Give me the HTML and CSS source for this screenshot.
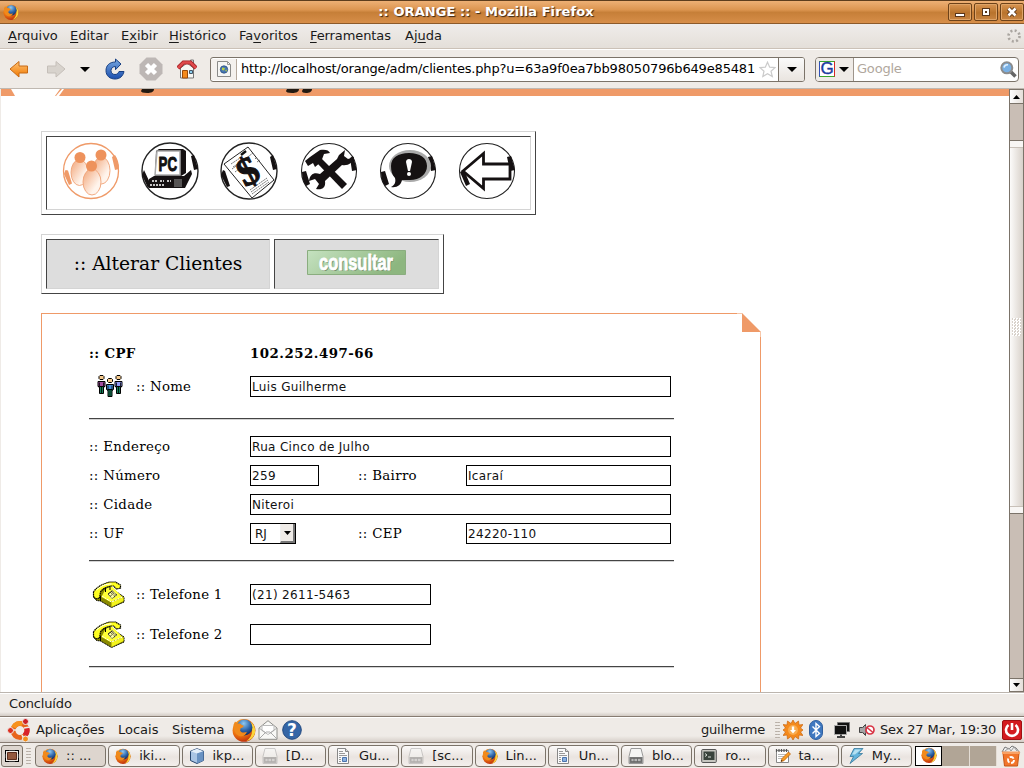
FILE: index.html
```html
<!DOCTYPE html>
<html lang="pt-BR">
<head>
<meta charset="utf-8">
<title>:: ORANGE ::</title>
<link rel="stylesheet" href="styles.css">
</head>
<body>
<svg class="defs" width="0" height="0">
  <defs>
    <radialGradient id="fox" cx="35%" cy="30%" r="75%"><stop offset="0" stop-color="#f8b02c"/><stop offset=".55" stop-color="#ee7510"/><stop offset="1" stop-color="#b8280c"/></radialGradient>
    <radialGradient id="globe" cx="45%" cy="25%" r="75%"><stop offset="0" stop-color="#8fc8f0"/><stop offset=".6" stop-color="#2c63a8"/><stop offset="1" stop-color="#122c60"/></radialGradient>
    <linearGradient id="orange" x2="0" y2="1"><stop offset="0" stop-color="#ffc477"/><stop offset="1" stop-color="#f07800"/></linearGradient>
    <linearGradient id="blue" x2="0" y2="1"><stop offset="0" stop-color="#78a8e0"/><stop offset="1" stop-color="#1c4fae"/></linearGradient>
    <linearGradient id="body" x2="1" y2="1"><stop offset="0" stop-color="#f1a376"/><stop offset=".7" stop-color="#fff4ec"/></linearGradient>
    <linearGradient id="green" x2="1" y2=".3"><stop offset="0" stop-color="#c5e2c0"/><stop offset="1" stop-color="#8db67f"/></linearGradient>
    <symbol id="i-fox" viewBox="0 0 16 16">
      <circle cx="8" cy="8.3" r="7.6" fill="url(#fox)"/>
      <path d="M12.5 2.5C15.6 5 16.3 9 14.4 12.2c-1.2 1.9-3 3-4.800 3.200 2.400-1.500 3.800-4 3.800-7 0-2.500-.4-4.200-.9-5.900z" fill="#fbd43a"/>
      <circle cx="8.300" cy="6.300" r="5.300" fill="url(#globe)"/>
      <path d="M1 4.500 2 2.300l1.800 1.500c1-.4 2 0 2.600.8l1.500.5c-.3 1-1.400 1.300-2.200 1.800l-.3 1.600c1 1.500 3 1.500 4.500.7-.4 2-2.300 3.300-4.400 3C2.700 11.500.8 8.400 1 4.500z" fill="#f08a1c"/>
    </symbol>
    <symbol id="i-doc" viewBox="0 0 16 16"><path d="M2.500.5h8l3 3v12h-11z" fill="#fafafa" stroke="#888"/><path d="M10.500.5v3h3" fill="#ddd" stroke="#888"/><path d="M4 3.500h4M4 5.500h6M4 7.500h8M4 9.500h2M4 11.500h2M4 13.500h2" stroke="#999"/><path d="M7.500 9.500h4v4h-4z" fill="#8ab0de" stroke="#4a74ae"/></symbol>
    <symbol id="i-calc" viewBox="0 0 16 16"><path d="M3 .5h10l2 8v7H1v-7z" fill="#f5f5f4" stroke="#999"/><path d="M1.500 9h13v6h-13z" fill="#777"/><path d="M3 10.500h10v3H3zM6 10v4M9.500 10v4M3 12h10" fill="#eee" stroke="#666" stroke-width=".8"/></symbol>
    <symbol id="i-cube" viewBox="0 0 16 16"><path d="m8 .7 6.500 2.500v9.200L8 15.500l-6.500-3V3.200z" fill="#a9c4e4" stroke="#26456f"/><path d="M1.500 3.200 8 5.500l6.500-2.300L8 .7z" fill="#e3eefa"/><path d="M8 5.500v10l6.500-3V3.200z" fill="#6a92c2"/></symbol>
    <symbol id="i-term" viewBox="0 0 16 16"><rect x=".7" y="1.500" width="14.600" height="13" rx="1" fill="#c6c6c0" stroke="#555"/><rect x="2.500" y="3.500" width="11" height="8.500" fill="#39433c"/><path d="m4 5.500 2 1.500-2 1.500M7 9h3" fill="none" stroke="#d8e0d8"/></symbol>
    <symbol id="i-note" viewBox="0 0 16 16"><path d="M1.500 2.500h12v12h-12z" fill="#fff" stroke="#888"/><path d="M1.500 1v3M4 1v3M6.500 1v3M9 1v3M11.500 1v3" stroke="#555" stroke-width="1.200"/><path d="M3 6.500h8M3 8.500h6M3 10.500h5" stroke="#bbb"/><path d="m6 13.500 1-3L13.500 4l2 2-6.500 6.700z" fill="#f79b25" stroke="#b95b06" stroke-width=".7"/><path d="m6 13.500.5-1.500 1 .9z"/></symbol>
    <symbol id="i-bolt" viewBox="0 0 16 16"><path d="M6 .5h9l-4.500 5h4L2 15.500l3.500-7H2z" fill="#64b4dc" stroke="#387a9c" stroke-width=".8"/><path d="M7 1.500h6L7 6.500H4z" fill="#b5e1f2"/></symbol>
    <symbol id="i-phone" viewBox="0 0 32 27">
      <path d="M1.500 12 1 16l3 3.500 4 .5 11 6.500 12.500-5.500v-5L20 8l-4-2z" fill="#8a8a00" stroke="#000" stroke-dasharray="1.500 .5"/>
      <path d="m9 16 4-8 6-3 2 2 9 9-12 5z" fill="#ff3"/><path d="m19 21 12-5v4l-12 6z" fill="#f3f31c"/>
      <path d="m9.500 15 9.500 6 11-5" fill="none" stroke="#fff" stroke-dasharray="2 1"/>
      <path d="m15 13 5-4 5 5-6 4z" fill="#ffffa8"/><path d="m15.500 13 4-3.500 5 4.500-5 3.500zm2-2 5 4.500m-4-5.500 5 4.500m-6 1 4-3.500m-6 1.500 4-3.500" fill="none" stroke="#000" stroke-width=".9" stroke-dasharray="1 .8"/>
      <path d="M1 11C4 6 10 3 17 1h6l5 3v3l-4 1-3-3h-2C13 6 10 8 8 11l-1 6-4 1-2-3z" fill="#ffff21" stroke="#000" stroke-width="1.200" stroke-dasharray="1.500 .5"/>
      <path d="M4 9c4-4 9-6 15-6" fill="none" stroke="#fff"/><path d="M17.500 5v4M13 7v4M8 15v5" fill="none" stroke="#000"/>
    </symbol>
    <symbol id="i-man" viewBox="0 0 9 19" preserveAspectRatio="none"><path d="M1 6.500h7v5H7v1H2v-1H1z" fill="currentColor" stroke="#000"/><path d="M2.500 11.500h4v7h-4z" fill="#16805a" stroke="#000"/><path d="M4.500 12v6M2.500 7.500v4M6.500 7.500v4" stroke="#000" stroke-width=".8"/><path d="M3 .5h3l1 1v2l-1 1H3l-1-1v-2z" fill="#f5c98c" stroke="#000"/></symbol>
  </defs>
</svg>

<div class="screen">
  <header class="titlebar">
    <svg class="ic16 title-icon"><use href="#i-fox"/></svg>
    <h1>:: ORANGE :: - Mozilla Firefox</h1>
    <div class="winbtns">
      <span><svg viewBox="0 0 22 16"><path d="M6 9h10v4H6z" fill="#59361a"/><path d="M7 10h8v2H7z" fill="#fff"/></svg></span>
      <span><svg viewBox="0 0 22 16"><path d="M7 4h8v8H7z" fill="#59361a"/><path d="M8 5h6v6H8z" fill="#fff"/><path d="M10 7h2v2h-2z" fill="#59361a"/></svg></span>
      <span><svg viewBox="0 0 22 16"><path d="m7.500 4.500 7 7m0-7-7 7" stroke="#59361a" stroke-width="4.500"/><path d="m7.500 4.500 7 7m0-7-7 7" stroke="#fff" stroke-width="2.600"/></svg></span>
    </div>
  </header>

  <nav class="menubar">
    <span class="m1"><u>A</u>rquivo</span><span class="m2"><u>E</u>ditar</span><span class="m3">E<u>x</u>ibir</span><span class="m4"><u>H</u>istórico</span><span class="m5">Fa<u>v</u>oritos</span><span class="m6"><u>F</u>erramentas</span><span class="m7">Aj<u>u</u>da</span>
    <svg class="throbber" viewBox="0 0 14 14"><circle cx="7" cy="7" r="5.500" fill="none" stroke="#aaa5a0" stroke-width="2.600" stroke-dasharray="2 2.320"/></svg>
  </nav>

  <div class="toolbar">
    <div class="tools">
      <svg class="t-back" viewBox="0 0 20 18"><path d="M1 9 10 1.500V6h8.500v7H10v4z" fill="url(#orange)" stroke="#c76a16"/></svg>
      <svg class="t-fwd" viewBox="0 0 20 18"><path d="M19 9 10 1.500V6H1.500v7H10v4z" fill="#d8d3cd" stroke="#c5bfb9"/></svg>
      <svg class="t-drop" viewBox="0 0 10 5"><path d="M0 0h10L5 5z"/></svg>
      <svg class="t-reload" viewBox="0 0 20 22"><path d="M10.500 1v3C4 4 1 8 1 12.500 1 18 5 21 10 21c5 0 8-3 9-7.500h-5c-1 2-2 3-4 3-2.500 0-4-1.500-4-4 0-2.300 2-4 4.500-4v3.200L16 6z" fill="url(#blue)" stroke="#173f82"/></svg>
      <svg class="t-stop" viewBox="0 0 24 24"><path d="M7.500.5h9l7 7v9l-7 7h-9l-7-7v-9z" fill="#bdb7b5"/><path d="m7.500 7.500 9 9m0-9-9 9" stroke="#fff" stroke-width="4.500"/></svg>
      <svg class="t-home" viewBox="0 0 20 20"><path d="M13.500 1h3v6h-3z" fill="#eee" stroke="#777"/><path d="M3.500 9 10 4l6.500 5v10h-13z" fill="#f7f7f4" stroke="#777"/><path d="M5.500 11.500h5v7.500h-5z" fill="#f58a1c" stroke="#9b4a08"/><path d="M12.500 11.500h3v3h-3z" fill="#8cd0f0" stroke="#456"/><path d="M1 9 6.500 3.500h7L19 9" fill="none" stroke="#9f1c20" stroke-width="4.200"/><path d="M1 9 6.500 3.500h7L19 9" fill="none" stroke="#df4a4c" stroke-width="2.600"/></svg>
    </div>
    <div class="urlbar">
      <span class="favicon"><svg viewBox="0 0 14 16"><path d="M.5.500h10l3 3v12H.5z" fill="#f6f6f4" stroke="#8a8a88"/><path d="M10.500.5v3h3" fill="none" stroke="#999"/><circle cx="7" cy="8.500" r="3.700" fill="#4677b4" stroke="#2a4e80" stroke-width=".8"/><path d="M5 6.500 8 7 7 9.500 5 9zM8 9.500l2-1-.5 2.200z" fill="#b9d040"/></svg></span>
      <span class="url">http://localhost/orange/adm/clientes.php?u=63a9f0ea7bb98050796b649e85481</span>
      <svg class="star" viewBox="0 0 17 17"><path d="m8.500 1.200 2.200 5 5.300.4-4 3.600 1.300 5.300-4.800-2.800-4.700 2.800L5 10.200 1 6.600l5.300-.4z" fill="#fff" stroke="#cbcbcb" stroke-width="1.200"/></svg>
      <span class="drop"><svg class="tri" viewBox="0 0 10 5"><path d="M0 0h10L5 5z"/></svg></span>
    </div>
    <div class="search">
      <span class="engine"><span class="glogo">G</span><svg class="tri" viewBox="0 0 10 5"><path d="M0 0h10L5 5z"/></svg></span>
      <span class="hint">Google</span>
      <svg class="lens" viewBox="0 0 17 17"><path d="m10.500 10.500 5 5" stroke="#666" stroke-width="3.500"/><circle cx="6.800" cy="6.800" r="5.500" fill="#79b0e4" stroke="#8c8c8c" stroke-width="2"/><path d="M4 6.500C4.500 4.500 6 3.600 8 3.800" stroke="#dff0ff" fill="none" stroke-width="1.700"/></svg>
    </div>
  </div>

  <div class="viewport">
    <main class="page">
      <svg class="banner" viewBox="0 0 1008 7" preserveAspectRatio="none">
        <path d="M0 0h1008v7H0z" fill="#ef9a68"/>
        <path d="M10 0h49l-5 7H14z" fill="#fff"/><path d="M63 0h-2l-6 7h3z" fill="#fff"/>
        <path d="M141 0h12c0 3-3 4-7 4-4 0-6-1-6-2zM286 0h12c0 3-3 4-7 4-4 0-6-1-6-2zM302 0h9c0 3-3 4-6 4-3 0-4-1-4-2z" fill="#231a12"/>
        <path d="M342 2h20M366 3h30M403 2h12" stroke="#e4a069" stroke-dasharray="5 3"/>
      </svg>
      <div class="bevel iconbar"><div class="cell icons">
        <svg viewBox="0 0 60 60"><circle cx="30" cy="30" r="27.500" fill="none" stroke="#ef9a68" stroke-width="1.300"/><path d="m4.500 29-1.500 4 5 11 3-1.500-4-13zM51 16l3-2c3 4 4 9 4 14l-4 1z" fill="#ef9a68"/><g fill="url(#body)" stroke="#efa176" stroke-width=".9"><ellipse cx="18.500" cy="31.500" rx="8.500" ry="13"/><ellipse cx="40.500" cy="29.500" rx="8.500" ry="13.500"/><ellipse cx="31" cy="41" rx="9" ry="13"/></g><g fill="#ee925c"><circle cx="19" cy="16.500" r="5.500"/><circle cx="40" cy="14" r="5.500"/><circle cx="30.500" cy="25" r="5.500"/></g></svg>
        <svg viewBox="0 0 60 60"><circle cx="30" cy="30" r="28" fill="#fff" stroke="#222" stroke-width="1.400"/><path d="M4 29 2 34l6 13 3-3zM51 15l3-1 4 14-4 1z" fill="#151112"/><path d="M14 35h30l7-6 1 4-7 14H9V38z" fill="#151112"/><path d="m16 10 3-2h24l3 2v22l-5 3H15z" fill="#151112"/><path d="M17 10h23v24H15z" fill="#fff" stroke="#aaa" stroke-width="1.500"/><text x="18.500" y="30" class="pc" textLength="18.500" lengthAdjust="spacingAndGlyphs">PC</text><path d="M12 40h5m3 0h4m3 0h4M10 44h15" stroke="#fff" stroke-width="1.600" stroke-dasharray="2 1"/><path d="M35 38v8m2-8v8m2-8v8m2-8v8" stroke="#bbb" stroke-width=".8"/></svg>
        <svg viewBox="0 0 60 60"><circle cx="30" cy="30" r="28" fill="none" stroke="#222" stroke-width="1.400"/><path d="m4 29-2 5 6 12 3-1-5-15zM51 16l3-2 4 14-4 1z" fill="#151112"/><path d="m5 23 24-17 26 33-22 18z" fill="#fff" stroke="#222"/><path d="m22 14 5-4" stroke="#111" stroke-width="2.500"/><path d="m12 23 9-6m-7 9 6-4m6-4 8-6M13 28l7-5m-4 8 4-3m16-10 2-2m0 5 3-2M31 49l17-12m-16 14 17-12m-16 14 17-12" stroke="#555" stroke-width=".8" stroke-dasharray="2 .7"/><text x="19" y="43" class="dollar" transform="rotate(-27 30 30)">$</text></svg>
        <svg viewBox="0 0 60 60"><circle cx="30" cy="30" r="27.500" fill="none" stroke="#222" stroke-width="1.100"/><path d="m3 31 4-1 4 13-4 2c-3-4-4-9-4-14zM51 17l3-2 4 14-5 1z" fill="#151112"/><path d="m22 17 26 26-5 5-25-26z" fill="#151112"/><path d="M11 16 21 9c5-1 9 0 10 3l-6 1-3 8-6 5-2-4-5 3-3-5z" fill="#151112"/><path d="m40 14 6-5-1 6 4 3 6-2c-1 6-6 9-12 8L26 40c1 7-3 9-9 8l3-5-4-5-6 2c1-7 5-9 11-7l17-15z" fill="#151112"/></svg>
        <svg viewBox="0 0 60 60"><circle cx="30" cy="30" r="27.500" fill="none" stroke="#222" stroke-width="1.100"/><path d="m3 31 4-1 4 13-4 2c-3-4-4-9-4-14zM50 16l4-1 4 14-5 1z" fill="#151112"/><ellipse cx="32" cy="25" rx="21" ry="16" fill="#aaa"/><path d="M31 12c11 0 18 5 18 13s-7 14-17 14h-8c-1 5-5 8-11 7 4-2 5-5 4-9-3-3-4-7-4-12 0-8 7-13 18-13z" fill="#151112"/><path d="M28 21c0-4 6-4 6 0l-2 9h-2z" fill="#fff"/><circle cx="31" cy="33" r="2" fill="#fff"/></svg>
        <svg viewBox="0 0 60 60"><circle cx="30" cy="30" r="27.500" fill="none" stroke="#222" stroke-width="1.100"/><path d="m3 31 4-2 6 14-4 2zM50 16l4-1 4 14-5 1z" fill="#151112"/><path d="M6 30 26.500 12.500V23H53v15H26.500v9.500z" fill="#fff" stroke="#151112" stroke-width="2.800"/></svg>
      </div></div>

      <div class="bevel headbar">
        <h2 class="cell">:: Alterar Clientes</h2>
        <div class="cell act"><svg class="consultar" viewBox="0 0 99 25"><path d="M.5.500h98v24H.5z" fill="url(#green)" stroke="#8aad7f"/><text x="13" y="21" class="shadow" textLength="74" lengthAdjust="spacingAndGlyphs">consultar</text><text x="12" y="20" class="face" textLength="74" lengthAdjust="spacingAndGlyphs">consultar</text></svg></div>
      </div>

      <form class="card">
        <svg class="fold" viewBox="0 0 24 24"><path d="M0 0h24v24H0z" fill="#fff"/><path d="M5 0v19h19z" fill="#ef9a68"/><path d="M0 .5h6M23.500 18v6" stroke="#f7c8aa"/></svg>
        <div class="row cpf"><b class="lbl">:: CPF</b><b class="big">102.252.497-66</b></div>
        <div class="row nome"><label class="lbl pic"><svg class="people" viewBox="0 0 26 22"><use href="#i-man" x="0" y="0" width="9" height="19" color="#a34da0"/><use href="#i-man" x="17" y="0" width="9" height="19" color="#949cf8"/><use href="#i-man" x="8.500" y="3" width="9" height="19" color="#4990dc"/></svg><span>:: Nome</span></label><span class="inp full">Luis Guilherme</span></div>
        <hr>
        <div class="row"><label class="lbl">:: Endereço</label><span class="inp full">Rua Cinco de Julho</span></div>
        <div class="row"><label class="lbl">:: Número</label><span class="first"><span class="inp num">259</span></span><label class="lbl2">:: Bairro</label><span class="inp half">Icaraí</span></div>
        <div class="row"><label class="lbl">:: Cidade</label><span class="inp full">Niteroi</span></div>
        <div class="row"><label class="lbl">:: UF</label><span class="first"><span class="inp sel"><span>RJ</span><i><svg viewBox="0 0 7 4"><path d="M0 0h7L3.500 4z"/></svg></i></span></span><label class="lbl2">:: CEP</label><span class="inp half">24220-110</span></div>
        <hr>
        <div class="row tel1"><label class="lbl pic"><svg class="phone"><use href="#i-phone"/></svg><span>:: Telefone 1</span></label><span class="inp tel">(21) 2611-5463</span></div>
        <div class="row tel2"><label class="lbl pic"><svg class="phone"><use href="#i-phone"/></svg><span>:: Telefone 2</span></label><span class="inp tel"></span></div>
        <hr>
      </form>
    </main>
    <div class="scroll">
      <span class="sbtn"><svg viewBox="0 0 7 4"><path d="M0 4h7L3.500 0z"/></svg></span>
      <span class="thumb"><span class="grip"></span></span>
      <span class="sbtn"><svg viewBox="0 0 7 4"><path d="M0 0h7L3.500 4z"/></svg></span>
    </div>
  </div>

  <div class="status">Concluído</div>

  <div class="panel">
    <svg class="ubuntu" viewBox="0 0 24 24"><circle cx="13" cy="12.500" r="7" fill="none" stroke="#e8641c" stroke-width="5"/><path d="M6.500 9.500a7 7 0 0 1 9-3.500" fill="none" stroke="#f7921e" stroke-width="5"/><path d="M19.500 9.500a7 7 0 0 1-2 8" fill="none" stroke="#d8232a" stroke-width="5"/><path d="m17 10 6-1M15 17l3 6M3 12h6" stroke="#efebe7" stroke-width="1.600"/><g stroke="#efebe7"><circle cx="3.500" cy="12.500" r="3" fill="#dc2f20"/><circle cx="18.500" cy="3.500" r="3" fill="#cc2027"/><circle cx="18.500" cy="21" r="3" fill="#f38e1b"/></g></svg>
    <span class="p1">Aplicações</span><span class="p2">Locais</span><span class="p3">Sistema</span>
    <svg class="pfox"><use href="#i-fox"/></svg>
    <svg class="mail" viewBox="0 0 20 20"><path d="M1 8 10 .7 19 8v11.300H1z" fill="#f8f8f6" stroke="#8e8e8a"/><path d="M4 5.500h12v5l-6 4-6-4z" fill="#fff" stroke="#bbb"/><path d="m1 19 7-7h4l7 7M1 8l7 5m11-5-7 5" fill="none" stroke="#aaa"/></svg>
    <svg class="help" viewBox="0 0 20 20"><circle cx="10" cy="10" r="9.300" fill="#3566a6" stroke="#234a80"/><text x="10" y="16" text-anchor="middle">?</text></svg>
    <span class="user">guilherme</span><i class="dots"></i>
    <svg class="sun" viewBox="0 0 20 20"><path d="m10 0 2 3.500L15.500 1l.5 4 4-.5L17.500 8l2.500 2-2.500 2 2.500 3.500-4-.5-.5 4-3.500-2.500L10 20l-2-3.500L4.500 19 4 15l-4 .5L2.500 12 0 10l2.500-2L0 4.500 4 5l.5-4L8 3.500z" fill="#f58a1c" stroke="#ca6610" stroke-width=".7"/><circle cx="10" cy="10" r="5" fill="#f9ac50"/><path d="M8.800 6.500h2.400V10H13l-3 3.500L7 10h1.800z" fill="#fff"/></svg>
    <svg class="bt" viewBox="0 0 14 20"><rect x=".5" y=".5" width="13" height="19" rx="6.500" fill="#3f78c0" stroke="#2f5f9f"/><path d="m3.500 6.500 7 7L7 16.500v-13l3.500 3-7 7" fill="none" stroke="#fff" stroke-width="1.400"/></svg>
    <svg class="net" viewBox="0 0 16 17"><path d="M3.500 1.500h12v9h-12z" fill="#111" stroke="#777"/><path d="M.5 4.500h12v9H.5z" fill="#111" stroke="#aaa"/><path d="M3 16h8M7 13.500V16" stroke="#444" stroke-width="2"/></svg>
    <svg class="vol" viewBox="0 0 16 14"><path d="M.5 4.500h3l3-3v11l-3-3h-3z" fill="#888" stroke="#444"/><path d="M2 5v4M4 5v4M6 3v7" stroke="#ddd" stroke-width=".7"/><circle cx="11" cy="7" r="4" fill="#fff" stroke="#d93646" stroke-width="1.700"/><path d="m8 4.500 6 5" stroke="#d93646" stroke-width="1.600"/></svg>
    <span class="clock">Sex 27 Mar, 19:30</span>
    <svg class="power" viewBox="0 0 20 20"><rect x=".5" y=".5" width="19" height="19" rx="1.500" fill="#d31b1f" stroke="#9f1013"/><path d="M6.500 5a6 6 0 1 0 7 0" fill="none" stroke="#fff" stroke-width="2.600"/><path d="M10 3v7" stroke="#fff" stroke-width="2.600"/></svg>
  </div>

  <div class="taskbar">
    <span class="desk"><svg viewBox="0 0 14 12"><path d="M.5.500h13v11H.5z" fill="#efe9e2" stroke="#333"/><path d="M2.500 2.500h9v7h-9z" fill="#94583c" stroke="#5a2c1b"/><path d="M0 4V0h4M10 0h4v4M14 8v4h-4M4 12H0V8" fill="none" stroke="#000" stroke-width="2"/></svg></span>
    <i class="dots"></i>
    <div class="tasks">
      <span class="task on"><svg><use href="#i-fox"/></svg>:: ...</span>
      <span class="task"><svg><use href="#i-fox"/></svg>iki...</span>
      <span class="task"><svg><use href="#i-cube"/></svg>ikp...</span>
      <span class="task dim"><svg><use href="#i-calc"/></svg>[D...</span>
      <span class="task"><svg><use href="#i-doc"/></svg>Gu...</span>
      <span class="task dim"><svg><use href="#i-calc"/></svg>[sc...</span>
      <span class="task"><svg><use href="#i-fox"/></svg>Lin...</span>
      <span class="task"><svg><use href="#i-doc"/></svg>Un...</span>
      <span class="task"><svg><use href="#i-calc"/></svg>blo...</span>
      <span class="task"><svg><use href="#i-term"/></svg>ro...</span>
      <span class="task"><svg><use href="#i-note"/></svg>ta...</span>
      <span class="task"><svg><use href="#i-bolt"/></svg>My...</span>
    </div>
    <div class="pager"><span class="cur"><svg class="ic16"><use href="#i-fox"/></svg></span><span></span><span></span></div>
    <svg class="trash" viewBox="0 0 20 22"><path d="m1 7 3-5 4 2 3-3 4 2 4 5z" fill="#eee" stroke="#777"/><path d="m4 6 4-3 2 3 3-4 3 4" fill="none" stroke="#999"/><path d="M2 8h16l-1.500 13h-13z" fill="#f2752b" stroke="#c65514"/><path d="M1 6.500h18v2.500H1z" fill="#f8a165"/><circle cx="10" cy="15" r="3" fill="none" stroke="#fff" stroke-width="1.800" stroke-dasharray="4.500 1.700"/></svg>
  </div>
</div>
</body>
</html>
```
FILE: styles.css
```css
* { box-sizing: border-box; }
body { margin: 0; background: #efebe7; color: #1a1a1a; font: 13px/16px "DejaVu Sans", sans-serif; }
svg { display: block; flex: none; }
.defs { position: absolute; }
.screen { width: 1024px; height: 768px; overflow: hidden; display: flex; flex-direction: column; white-space: nowrap; }
.ic16 { width: 16px; height: 16px; }

.titlebar { height: 24px; flex: none; display: flex; align-items: center; padding: 0 0 0 3px; border-top: 1px solid #5d3d1d; border-bottom: 1px solid #8c5a2a; background: linear-gradient(#edb075 0, #dc9550 40%, #c67f38 52%, #d78e49 100%); }
.titlebar h1 { flex: 1; margin: 0; padding-left: 5px; text-align: center; font: bold 13px/20px "DejaVu Sans", sans-serif; letter-spacing: .06px; color: #fff; text-shadow: 1px 1px 1px #3a2614; }
.winbtns { display: flex; gap: 2px; }
.winbtns span { width: 24px; height: 18px; border: 1px solid #6d4219; border-radius: 2px; background: linear-gradient(#d99552, #b8732c 55%, #c98543); box-shadow: inset 0 0 0 1px #dfa467; }
.winbtns svg { width: 22px; height: 16px; }

.menubar { height: 25px; flex: none; display: flex; align-items: center; padding-left: 8px; border-bottom: 1px solid #cbc1b7; background: linear-gradient(#efecea, #e4dfd9); }
.menubar u { text-underline-offset: 2px; }
.m1 { width: 62px; } .m2 { width: 51px; } .m3 { width: 48px; } .m4 { width: 70px; } .m5 { width: 71px; } .m6 { width: 95px; } .m7 { flex: 1; }
.m6 { letter-spacing: -.1px; }
.throbber { width: 14px; height: 14px; margin-right: 3px; }

.toolbar { height: 40px; flex: none; display: flex; align-items: center; border-top: 1px solid #fff; border-bottom: 1px solid #bfb8b1; background: #efebe7; }
.tools { width: 210px; display: flex; align-items: center; padding-left: 9px; }
.t-back { width: 20px; height: 18px; }
.t-fwd { width: 20px; height: 18px; margin-left: 17px; }
.t-drop { width: 10px; height: 5px; margin-left: 14px; }
.t-reload { width: 20px; height: 22px; margin-left: 15px; }
.t-stop { width: 24px; height: 24px; margin-left: 14px; }
.t-home { width: 20px; height: 20px; margin-left: 14px; }
.urlbar { width: 595px; height: 25px; display: flex; align-items: center; border: 1px solid #7b7369; border-radius: 3px; background: #fff; }
.favicon { width: 26px; height: 21px; flex: none; display: flex; align-items: center; justify-content: center; border-right: 1px solid #b6aa9e; background: #f4f1ee; }
.favicon svg { width: 14px; height: 16px; }
.url { width: 520px; padding-left: 4px; letter-spacing: -.17px; color: #000; }
.star { width: 17px; height: 17px; margin-left: 2px; }
.drop { height: 23px; margin-left: auto; width: 26px; border-left: 1px solid #7b7369; background: linear-gradient(#fafafa, #e9e4df); display: flex; align-items: center; justify-content: center; border-radius: 0 2px 2px 0; }
.tri { width: 10px; height: 5px; }
.search { width: 204px; height: 25px; margin-left: 10px; display: flex; align-items: center; border: 1px solid #7b7369; border-radius: 4px; background: #fff; overflow: hidden; }
.engine { width: 38px; height: 23px; display: flex; align-items: center; gap: 4px; padding-left: 3px; border-right: 1px solid #9e958c; background: #efebe7; }
.glogo { width: 16px; height: 16px; border: 1px solid #3aa62c; border-right-color: #d62828; border-left-color: #3050b8; background: #fff; color: #1b3ba0; font: 17px/14px "Liberation Sans", sans-serif; text-align: center; display: block; -webkit-text-stroke: .4px #1b3ba0; }
.hint { flex: 1; padding-left: 3px; color: #b0a79d; letter-spacing: -.2px; }
.lens { width: 17px; height: 17px; margin-right: 1px; }

.viewport { height: 603px; flex: none; display: flex; padding-left: 1px; }
.page { width: 1008px; background: #fff; overflow: hidden; }
.banner { width: 1008px; height: 7px; }
.bevel { margin-left: 40px; padding: 4px; border: 1px solid; border-color: #d4d4d4 #444 #444 #d4d4d4; display: flex; }
.cell { border: 1px solid; border-color: #444 #d4d4d4 #d4d4d4 #444; }
.iconbar { width: 495px; height: 84px; margin-top: 35px; }
.icons { flex: 1; display: grid; grid-template-columns: repeat(6, 60px); column-gap: 19.200px; padding: 4px 0 0 14px; }
.icons svg { width: 60px; height: 60px; }
.pc { font: bold 21px "Liberation Sans", sans-serif; fill: #111; stroke: #111; stroke-width: 1px; }
.dollar { font: bold 40px "Liberation Serif", serif; fill: #151112; stroke: #151112; stroke-width: 1px; }
.headbar { width: 403px; height: 60px; margin-top: 19px; gap: 4px; }
.headbar .cell { height: 50px; background: #ddd; }
.headbar h2 { margin: 0; width: 224px; text-align: center; font: 18.670px/48px "DejaVu Serif", serif; color: #000; }
.act { width: 165px; display: flex; justify-content: center; padding-top: 10px; }
.consultar { width: 99px; height: 25px; overflow: visible; }
.consultar text { font: bold 22px "Liberation Sans Narrow", "Liberation Sans", sans-serif; }
.shadow { fill: #6f8d68; }
.face { fill: #fff; stroke: #fff; stroke-width: .8px; }

.card { width: 720px; height: 500px; margin: 19px 0 0 40px; padding: 25px 0 0 47px; border: 1px solid #ef9a68; position: relative; }
.fold { position: absolute; right: -1px; top: -1px; width: 24px; height: 24px; }
.row { height: 29px; display: flex; align-items: center; }
.cpf { height: 28px; } .nome { height: 39px; } .tel1 { height: 41px; } .tel2 { height: 39px; }
.lbl, .lbl2, .big { font-family: "DejaVu Serif", serif; font-size: 13.330px; letter-spacing: .33px; color: #000; }
.big { letter-spacing: .5px; }
.lbl { width: 161px; }
.lbl2 { width: 108px; }
.pic { display: flex; align-items: center; }
.pic span { margin-left: auto; width: 114px; letter-spacing: .25px; }
.people { width: 26px; height: 22px; margin: -2px 0 0 8px; }
.phone { width: 33px; height: 27px; margin-left: 3px; }
.inp { height: 21px; border: 1px solid #000; padding-left: 1px; font-size: 12px; line-height: 20px; letter-spacing: .33px; color: #111; display: block; background: #fff; }
.full { width: 421px; } .num { width: 69px; } .half { width: 205px; } .tel { width: 181px; }
.first { width: 108px; }
.sel { width: 46px; display: flex; justify-content: space-between; padding: 0 0 0 4px; letter-spacing: 0; }
.sel i { width: 15px; height: 19px; background: #efebe7; border: 1px solid; border-color: #eee #777 #777 #eee; border-width: 0 2px 2px 1px; display: flex; align-items: center; justify-content: center; }
.sel i svg { width: 7px; height: 4px; }
.card hr { width: 585px; height: 2px; margin: 12px 0; border: 0; border-top: 1px solid #444; background: #d4d4d4; }

.scroll { width: 15px; display: flex; flex-direction: column; background: #c9beb5; border: solid #7b7369; border-width: 1px 1px 0; }
.sbtn { height: 14px; flex: none; display: flex; align-items: center; justify-content: center; background: linear-gradient(90deg, #fdfdfd, #e5dfd9); border-bottom: 1px solid #7b7369; }
.sbtn svg { width: 7px; height: 4px; }
.thumb { margin-top: 36px; height: 374px; border: solid #7b7369; border-width: 1px 0; background: linear-gradient(90deg, #fcfbfa, #ece8e4 45%, #d8d1ca); display: flex; align-items: center; justify-content: center; position: relative; }
.thumb::before, .thumb::after { content: ""; position: absolute; left: 0; right: 0; height: 6px; background: #f8f6f4; }
.thumb::before { top: 0; border-bottom: 1px solid #c9c1b9; }
.thumb::after { bottom: 0; border-top: 1px solid #c9c1b9; }
.grip { width: 9px; height: 18px; background: repeating-conic-gradient(#fff 0 25%, #d8d1ca 0 50%) 0 0 / 3px 3px; }
.thumb + .sbtn { margin-top: auto; border-top: 1px solid #7b7369; }

.status { height: 25px; flex: none; padding: 3px 9px 0; border-top: 1px solid #bcb5ae; border-bottom: 1px solid #877c72; background: linear-gradient(#fff 0 1px, #efebe7 1px 19px, #d2cbc5); letter-spacing: -.15px; }
.panel { height: 26px; flex: none; display: flex; align-items: center; padding-left: 7px; border-bottom: 1px solid #877c72; background: linear-gradient(#fff 0 1px, #efebe7 1px 19px, #d5cec8); }
.ubuntu { width: 24px; height: 24px; }
.p1 { width: 82px; margin-left: 5px; letter-spacing: -.1px; } .p2 { width: 54px; } .p3 { width: 60px; }
.pfox { width: 24px; height: 24px; } .mail { width: 20px; height: 20px; margin-left: 2px; } .help { width: 20px; height: 20px; margin-left: 4px; }
.help text { font: bold 17px "DejaVu Sans", sans-serif; fill: #fff; }
.user { margin-left: auto; width: 74px; letter-spacing: -.2px; }
.dots { width: 5px; height: 18px; flex: none; background: radial-gradient(circle, #b5aca3 0 .8px, transparent 1px) 0 0 / 2.500px 3px; }
.sun { width: 20px; height: 20px; margin-left: 3px; } .bt { width: 14px; height: 20px; margin-left: 6px; }
.net { width: 16px; height: 17px; margin-left: 11px; } .vol { width: 16px; height: 14px; margin-left: 9px; }
.clock { width: 116px; margin-left: 5px; letter-spacing: -.15px; padding-top: 1px; } .power { width: 20px; height: 20px; margin: 0 2px 0 6px; }

.taskbar { height: 25px; flex: none; display: flex; align-items: center; padding-left: 1px; background: #efebe7; }
.desk { width: 22px; height: 22px; display: flex; align-items: center; justify-content: center; border: 1px solid #7b7369; border-radius: 3px; background: #ddd6cf; }
.desk svg { width: 14px; height: 12px; }
.desk + .dots { margin: 0 4px 0 3px; }
.tasks { width: 877px; height: 22px; display: grid; grid-template-columns: repeat(12, 1fr); gap: 2px; }
.task { display: flex; align-items: center; gap: 8px; padding-left: 6px; border: 1px solid #7b7369; border-radius: 4px; background: linear-gradient(#faf9f8, #eae4e0 55%, #f3efec); overflow: hidden; }
.task svg { width: 16px; height: 16px; }
.task.on { background: #ddd5ce; }
.task.dim svg { opacity: .45; }
.pager { width: 82px; height: 20px; margin-left: 3px; display: grid; grid-template-columns: repeat(3, 1fr); background: #b1a596; }
.pager span { border-right: 1px solid #e4ddd5; }
.pager .cur { background: #fff; border: 1px solid #000; padding-left: 5px; }
.trash { width: 20px; height: 22px; margin-left: 4px; }
```
